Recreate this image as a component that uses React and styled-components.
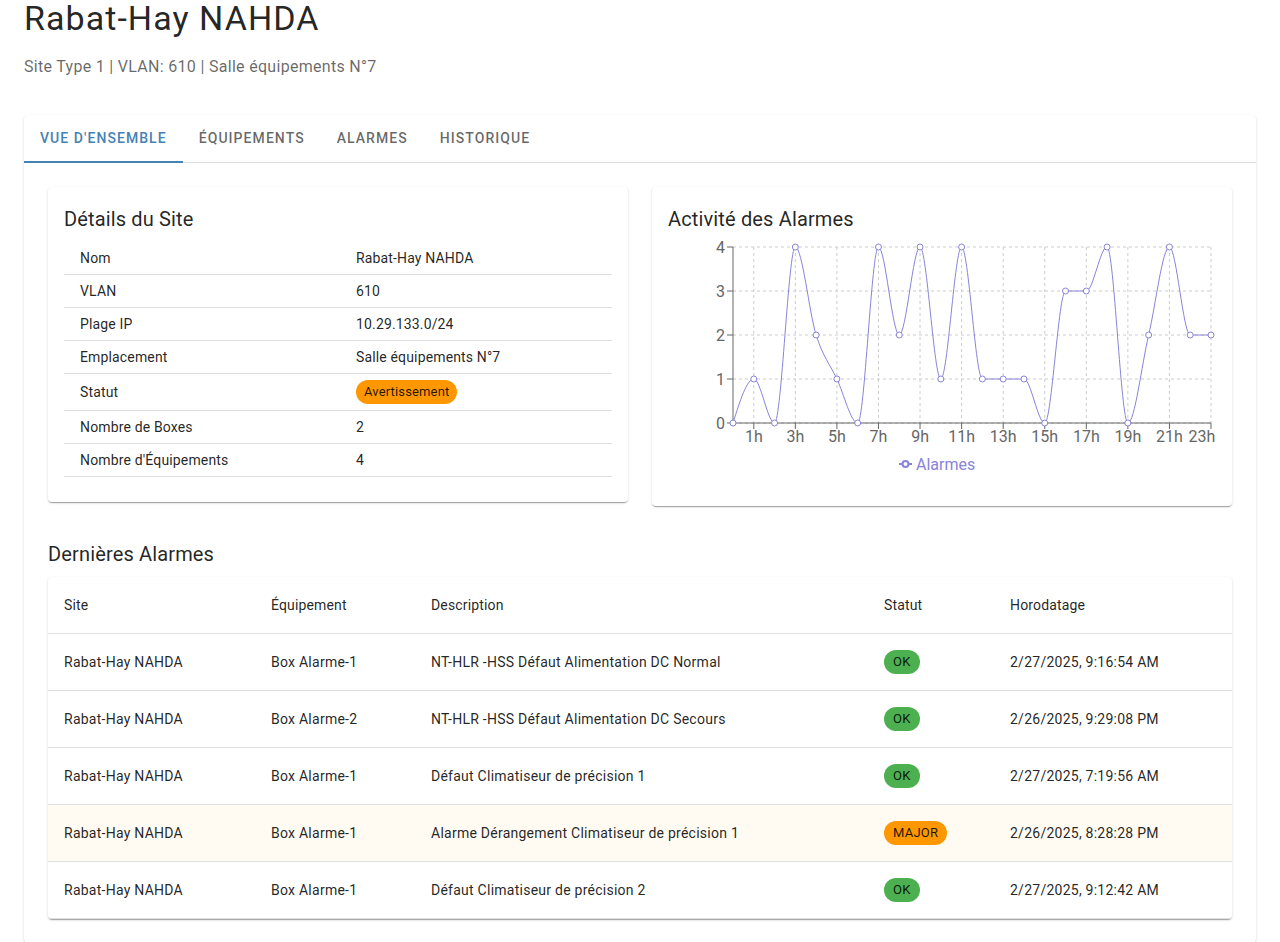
import React, { useState } from 'react';
import styled, { createGlobalStyle } from 'styled-components';

const GlobalStyle = createGlobalStyle`
  body {
    margin: 0;
    background: #fff;
    font-family: Roboto, "Noto Sans", "Liberation Sans", sans-serif;
    color: rgba(0, 0, 0, 0.87);
  }
  * { box-sizing: border-box; }
`;

const site = {
  name: 'Rabat-Hay NAHDA',
  type: 'Site Type 1',
  vlan: '610',
  ip: '10.29.133.0/24',
  location: 'Salle équipements N°7',
  boxes: 2,
  equipments: 4,
};

const activity = [0, 1, 0, 4, 2, 1, 0, 4, 2, 4, 1, 4, 1, 1, 1, 0, 3, 3, 4, 0, 2, 4, 2, 2];

const alarms = [
  { equip: 'Box Alarme-1', desc: 'NT-HLR -HSS Défaut Alimentation DC Normal', status: 'OK', time: '2/27/2025, 9:16:54 AM' },
  { equip: 'Box Alarme-2', desc: 'NT-HLR -HSS Défaut Alimentation DC Secours', status: 'OK', time: '2/26/2025, 9:29:08 PM' },
  { equip: 'Box Alarme-1', desc: 'Défaut Climatiseur de précision 1', status: 'OK', time: '2/27/2025, 7:19:56 AM' },
  { equip: 'Box Alarme-1', desc: 'Alarme Dérangement Climatiseur de précision 1', status: 'MAJOR', time: '2/26/2025, 8:28:28 PM' },
  { equip: 'Box Alarme-1', desc: 'Défaut Climatiseur de précision 2', status: 'OK', time: '2/27/2025, 9:12:42 AM' },
];

const tabs = ["Vue d'ensemble", 'Équipements', 'Alarmes', 'Historique'];

// d3-like monotoneX curve
function monotonePath(pts) {
  const n = pts.length;
  const sign = (v) => (v < 0 ? -1 : 1);
  const t = new Array(n).fill(0);
  for (let i = 1; i < n - 1; i++) {
    const [x0, y0] = pts[i - 1];
    const [x1, y1] = pts[i];
    const [x2, y2] = pts[i + 1];
    const h0 = x1 - x0;
    const h1 = x2 - x1;
    const s0 = (y1 - y0) / h0;
    const s1 = (y2 - y1) / h1;
    const p = (s0 * h1 + s1 * h0) / (h0 + h1);
    t[i] = (sign(s0) + sign(s1)) * Math.min(Math.abs(s0), Math.abs(s1), 0.5 * Math.abs(p)) || 0;
  }
  const h = pts[1][0] - pts[0][0];
  t[0] = (3 * (pts[1][1] - pts[0][1]) / h - t[1]) / 2;
  const hl = pts[n - 1][0] - pts[n - 2][0];
  t[n - 1] = (3 * (pts[n - 1][1] - pts[n - 2][1]) / hl - t[n - 2]) / 2;
  let d = `M${pts[0][0]},${pts[0][1]}`;
  for (let i = 0; i < n - 1; i++) {
    const [x0, y0] = pts[i];
    const [x1, y1] = pts[i + 1];
    const dx = (x1 - x0) / 3;
    d += `C${x0 + dx},${y0 + dx * t[i]},${x1 - dx},${y1 - dx * t[i + 1]},${x1},${y1}`;
  }
  return d;
}

function AlarmChart() {
  const left = 65;
  const right = 543;
  const top = 5;
  const bottom = 181;
  const xOf = (i) => left + (i * (right - left)) / (activity.length - 1);
  const yOf = (v) => bottom - (v * (bottom - top)) / 4;
  const pts = activity.map((v, i) => [xOf(i), yOf(v)]);
  const odd = activity.map((_, i) => i).filter((i) => i % 2 === 1);

  return (
    <ChartSvg width="548" height="248" viewBox="0 0 548 248">
      <g stroke="#ccc" strokeDasharray="3 3" fill="none">
        {[0, 1, 2, 3, 4].map((v) => (
          <line key={v} x1={left} x2={right} y1={yOf(v)} y2={yOf(v)} />
        ))}
        {odd.map((i) => (
          <line key={i} x1={xOf(i)} x2={xOf(i)} y1={top} y2={bottom} />
        ))}
      </g>
      <g stroke="#666">
        <line x1={left} x2={left} y1={top} y2={bottom} />
        {[0, 1, 2, 3, 4].map((v) => (
          <line key={v} x1={left - 6} x2={left} y1={yOf(v)} y2={yOf(v)} />
        ))}
        <line x1={left} x2={right} y1={bottom} y2={bottom} />
        {odd.map((i) => (
          <line key={i} x1={xOf(i)} x2={xOf(i)} y1={bottom} y2={bottom + 6} />
        ))}
      </g>
      <g fill="#666" fontSize="16">
        {[0, 1, 2, 3, 4].map((v) => (
          <text key={v} x={left - 8} y={yOf(v)} dy="0.355em" textAnchor="end">{v}</text>
        ))}
        {odd.map((i) => (
          <text key={i} x={Math.min(xOf(i), 534)} y={bottom + 8} dy="0.71em" textAnchor="middle">{i}h</text>
        ))}
      </g>
      <path d={monotonePath(pts)} fill="none" stroke="#8884d8" strokeWidth="1" />
      {pts.map(([x, y], i) => (
        <circle key={i} cx={x} cy={y} r="3" fill="#fff" stroke="#8884d8" strokeWidth="1" />
      ))}
      <g>
        <line x1="231" x2="244" y1="222" y2="222" stroke="#8884d8" strokeWidth="2" />
        <circle cx="237.5" cy="222" r="3" fill="#fff" stroke="#8884d8" strokeWidth="2" />
        <text x="248" y="222" dy="0.355em" fill="#8884d8" fontSize="16">Alarmes</text>
      </g>
    </ChartSvg>
  );
}

export default function App() {
  const [tab, setTab] = useState(0);

  const details = [
    ['Nom', site.name],
    ['VLAN', site.vlan],
    ['Plage IP', site.ip],
    ['Emplacement', site.location],
    ['Statut', <Chip key="c" $tone="warning">Avertissement</Chip>],
    ['Nombre de Boxes', site.boxes],
    ["Nombre d'Équipements", site.equipments],
  ];

  return (
    <Page>
      <GlobalStyle />
      <Title>{site.name}</Title>
      <Subtitle>{site.type} | VLAN: {site.vlan} | {site.location}</Subtitle>

      <Paper>
        <TabBar>
          {tabs.map((t, i) => (
            <Tab key={t} $active={i === tab} onClick={() => setTab(i)}>{t}</Tab>
          ))}
        </TabBar>

        <TabContent>
          <CardGrid>
            <Card>
              <CardTitle>Détails du Site</CardTitle>
              <DetailTable>
                <colgroup>
                  <col style={{ width: 276 }} />
                  <col />
                </colgroup>
                <tbody>
                  {details.map(([label, value]) => (
                    <tr key={label}>
                      <DetailCell>{label}</DetailCell>
                      <DetailCell>{value}</DetailCell>
                    </tr>
                  ))}
                </tbody>
              </DetailTable>
            </Card>

            <Card>
              <CardTitle>Activité des Alarmes</CardTitle>
              <AlarmChart />
            </Card>
          </CardGrid>

          <SectionTitle>Dernières Alarmes</SectionTitle>
          <TablePaper>
            <AlarmTable>
              <colgroup>
                <col style={{ width: 207 }} />
                <col style={{ width: 160 }} />
                <col style={{ width: 453 }} />
                <col style={{ width: 126 }} />
                <col />
              </colgroup>
              <thead>
                <tr>
                  <HeadCell>Site</HeadCell>
                  <HeadCell>Équipement</HeadCell>
                  <HeadCell>Description</HeadCell>
                  <HeadCell>Statut</HeadCell>
                  <HeadCell>Horodatage</HeadCell>
                </tr>
              </thead>
              <tbody>
                {alarms.map((a, i) => (
                  <AlarmRow key={i} $alert={a.status !== 'OK'}>
                    <BodyCell>{site.name}</BodyCell>
                    <BodyCell>{a.equip}</BodyCell>
                    <BodyCell>{a.desc}</BodyCell>
                    <BodyCell>
                      <Chip $tone={a.status === 'OK' ? 'success' : 'warning'} $caps>{a.status}</Chip>
                    </BodyCell>
                    <BodyCell>{a.time}</BodyCell>
                  </AlarmRow>
                ))}
              </tbody>
            </AlarmTable>
          </TablePaper>
        </TabContent>
      </Paper>
    </Page>
  );
}

const shadow1 =
  '0px 2px 1px -1px rgba(0,0,0,0.2), 0px 1px 1px 0px rgba(0,0,0,0.14), 0px 1px 3px 0px rgba(0,0,0,0.12)';

const Page = styled.div`
  padding: 0 24px 24px;
`;

const Title = styled.h1`
  margin: -2px 0 15px;
  font-size: 34px;
  font-weight: 400;
  line-height: 1.235;
  letter-spacing: 1.05px;
`;

const Subtitle = styled.p`
  margin: 0 0 36px;
  font-size: 16px;
  line-height: 1.5;
  letter-spacing: 0.3px;
  color: rgba(0, 0, 0, 0.6);
`;

const Paper = styled.div`
  background: #fff;
  border-radius: 4px;
  box-shadow: ${shadow1};
`;

const TabBar = styled.div`
  display: flex;
  border-bottom: 1px solid rgba(0, 0, 0, 0.12);
`;

const Tab = styled.button`
  display: flex;
  align-items: center;
  justify-content: center;
  min-width: 90px;
  height: 48px;
  padding: 1px 16px 0;
  margin: 0 0 -1px;
  border: 0;
  border-bottom: 2px solid ${(p) => (p.$active ? '#4682b4' : 'transparent')};
  background: none;
  font-family: inherit;
  font-size: 14px;
  font-weight: 500;
  letter-spacing: 1.06px;
  line-height: 1.25;
  text-transform: uppercase;
  color: ${(p) => (p.$active ? '#4682b4' : 'rgba(0, 0, 0, 0.6)')};
  cursor: pointer;
`;

const TabContent = styled.div`
  padding: 24px;
`;

const CardGrid = styled.div`
  display: grid;
  grid-template-columns: 1fr 1fr;
  gap: 24px;
  align-items: start;
`;

const Card = styled.div`
  background: #fff;
  border-radius: 4px;
  box-shadow: ${shadow1};
  padding: 16px;
`;

const CardTitle = styled.h6`
  margin: 0 0 7px;
  font-size: 20px;
  font-weight: 400;
  line-height: 1.6;
  letter-spacing: 0.0075em;
`;

const DetailTable = styled.table`
  width: 100%;
  border-collapse: collapse;
  table-layout: fixed;
  margin-bottom: 9px;
`;

const DetailCell = styled.td`
  padding: 6px 16px;
  font-size: 14px;
  line-height: 1.43;
  letter-spacing: 0.01071em;
  border-bottom: 1px solid #e0e0e0;
  vertical-align: middle;
`;

const Chip = styled.span`
  display: inline-flex;
  align-items: center;
  height: 24px;
  padding: 0 ${(p) => (p.$caps ? '9px' : '8px')};
  border-radius: 16px;
  font-size: 13px;
  color: rgba(0, 0, 0, 0.87);
  background: ${(p) => (p.$tone === 'success' ? '#4caf50' : '#ff9800')};
`;

const ChartSvg = styled.svg`
  display: block;
  overflow: visible;
`;

const SectionTitle = styled.h6`
  margin: 32px 0 7px;
  font-size: 20px;
  font-weight: 400;
  line-height: 1.6;
  letter-spacing: 0.0075em;
`;

const TablePaper = styled.div`
  background: #fff;
  border-radius: 4px;
  box-shadow: ${shadow1};
  overflow: hidden;
`;

const AlarmTable = styled.table`
  width: 100%;
  border-collapse: collapse;
  table-layout: fixed;
`;

const HeadCell = styled.th`
  padding: 16px;
  text-align: left;
  font-size: 14px;
  font-weight: 400;
  line-height: 24px;
  letter-spacing: 0.01071em;
  border-bottom: 1px solid #e0e0e0;
`;

const AlarmRow = styled.tr`
  background: ${(p) => (p.$alert ? '#fffaf2' : 'transparent')};
`;

const BodyCell = styled.td`
  padding: 16px;
  height: 57px;
  font-size: 14px;
  line-height: 1.43;
  letter-spacing: 0.25px;
  border-bottom: 1px solid #e0e0e0;
  vertical-align: middle;
`;
